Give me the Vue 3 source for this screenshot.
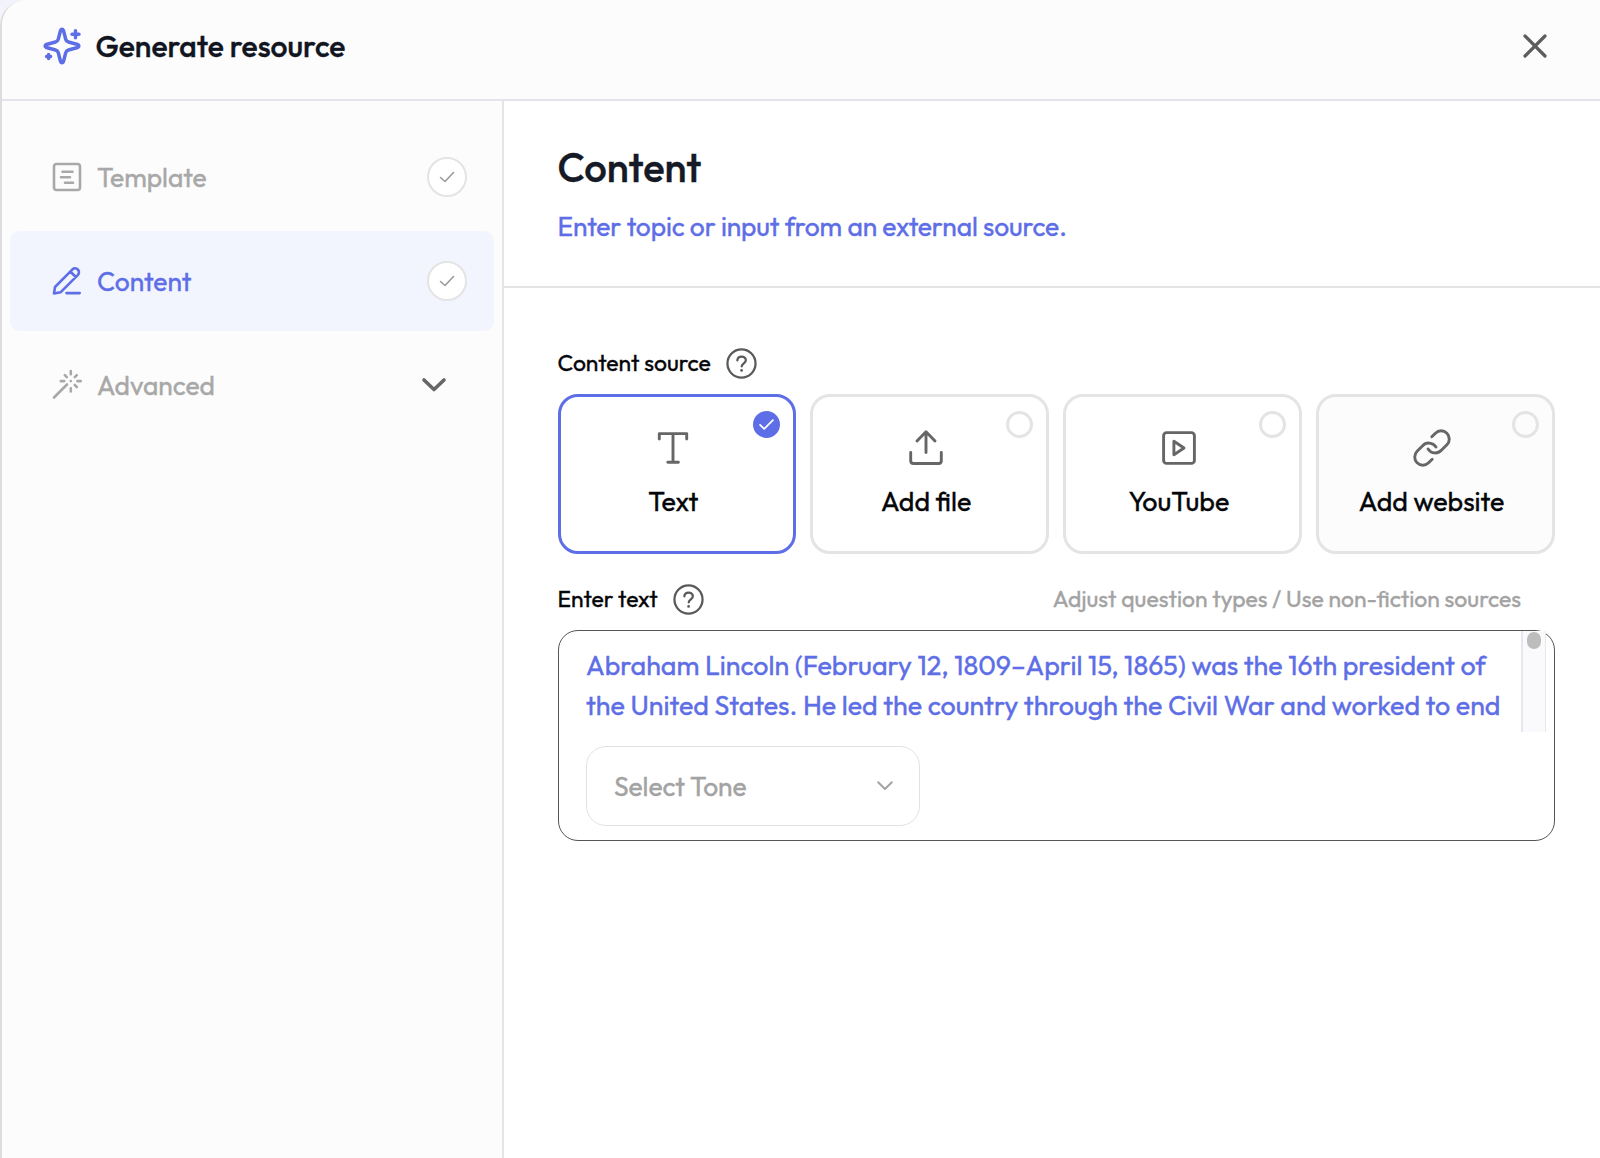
<script setup>
import { ref } from 'vue'

const steps = [
  { id: 'template', label: 'Template', done: true },
  { id: 'content', label: 'Content', done: true },
  { id: 'advanced', label: 'Advanced', done: false },
]

const sources = [
  { id: 'text', label: 'Text' },
  { id: 'file', label: 'Add file' },
  { id: 'youtube', label: 'YouTube' },
  { id: 'website', label: 'Add website' },
]

const activeStep = ref('content')
const activeSource = ref('text')
const lines = [
  'Abraham Lincoln (February 12, 1809–April 15, 1865) was the 16th president of',
  'the United States. He led the country through the Civil War and worked to end',
]
</script>

<template>
  <div class="backdrop">
    <div class="dialog">
      <header class="dialog-header">
        <svg class="sparkle" viewBox="0 0 38 38">
          <path
            d="M19 2.2c.9 0 1.3.8 1.6 1.8l2.1 8.2c.4 1.6 1.2 2.4 2.8 2.8l8.2 2.2c1 .3 2.1.7 2.1 1.8s-1.1 1.5-2.1 1.8l-8.2 2.2c-1.6.4-2.4 1.2-2.8 2.8L20.6 34c-.3 1-.7 1.8-1.6 1.8s-1.3-.8-1.6-1.8l-2.1-8.2c-.4-1.6-1.2-2.4-2.8-2.8l-8.2-2.2c-1-.3-2.1-.7-2.1-1.8s1.1-1.5 2.1-1.8l8.2-2.2c1.6-.4 2.4-1.2 2.8-2.8L17.4 4c.3-1 .7-1.8 1.6-1.8z"
          />
          <path d="M32.5 3.8v7M29 7.3h7M5.6 27.6v4M3.6 29.6h4" />
        </svg>
        <h1>Generate resource</h1>
        <button class="close" type="button" aria-label="Close">
          <svg viewBox="0 0 24 24"><path d="M2 2l20 20M22 2L2 22" /></svg>
        </button>
      </header>

      <div class="dialog-body">
        <nav class="sidebar">
          <button
            v-for="step in steps"
            :key="step.id"
            type="button"
            class="step"
            :class="{ active: step.id === activeStep }"
            @click="activeStep = step.id"
          >
            <svg class="step-icon" viewBox="0 0 30 30">
              <template v-if="step.id === 'template'">
                <rect x="2" y="2" width="26" height="26" rx="2.5" />
                <path d="M10.5 9.7h10M9 15.2h9M13 20.7h8" />
              </template>
              <template v-else-if="step.id === 'content'">
                <path d="M2 27.5l1-6.5L20.5 3.3a3.9 3.9 0 0 1 5.5 5.5L8.5 26.3zM18.3 5.5l5.5 5.5M14.5 27.1h13.2" />
              </template>
              <template v-else>
                <path d="M2 27.5l13-13M18.8 1v3.2M18.8 18.2v3.2M8.8 11.1h3.4M25.4 11.1h3.4M12.8 5.2l2 2M24.800 5.2l-2 2M24.800 17l-2-2M18.800 11.1h.01" />
              </template>
            </svg>
            <span class="step-label">{{ step.label }}</span>
            <span v-if="step.done" class="step-check">
              <svg viewBox="0 0 16 12"><path d="M1.5 6.5l4.5 4L14.5 1.5" /></svg>
            </span>
            <svg v-else class="step-chevron" viewBox="0 0 24 14"><path d="M2 2l10 9.5L22 2" /></svg>
          </button>
        </nav>

        <main class="pane">
          <div class="pane-header">
            <h2>Content</h2>
            <p>Enter topic or input from an external source.</p>
          </div>

          <div class="pane-body">
            <div class="field-row">
              <span class="field-label">Content source</span>
              <svg class="help" viewBox="0 0 32 32">
                <circle cx="16" cy="16" r="14.5" />
                <path d="M11.7 12.8c.2-2.4 2-4 4.4-4 2.5 0 4.4 1.6 4.4 3.9 0 2.9-4.2 3.3-4.3 6.3" />
                <path class="help-dot" d="M16.1 23.1h.01" />
              </svg>
            </div>

            <div class="cards">
              <button
                v-for="source in sources"
                :key="source.id"
                type="button"
                class="card"
                :class="[source.id, { selected: source.id === activeSource }]"
                @click="activeSource = source.id"
              >
                <svg class="card-icon" viewBox="0 0 38 38">
                  <path v-if="source.id === 'text'" d="M5.3 10V4.6h27.4V10M19 4.6v28.6M13.8 33.2h10.6" />
                  <path v-else-if="source.id === 'file'" d="M19 23.5V3M10 12l9-9.3 9 9.3M3.7 23.5v8.2q0 2.8 2.8 2.8h25q2.8 0 2.8-2.8v-8.2" />
                  <template v-else-if="source.id === 'youtube'">
                    <rect x="3.6" y="3.6" width="30.8" height="30.8" rx="3" />
                    <path d="M13.9 12.3v13.4L24 19z" />
                  </template>
                  <path
                    v-else
                    d="M18.8 7.7l3.6-3.5a8.13 8.13 0 0 1 11.5 11.5l-5.3 5.3a8.5 8.5 0 0 1-13.6-1M19.2 30.3l-3.6 3.5A8.13 8.13 0 0 1 4.1 22.3l5.3-5.3a8.5 8.5 0 0 1 13.6 1"
                  />
                </svg>
                <span>{{ source.label }}</span>
                <i class="radio">
                  <svg v-if="source.id === activeSource" viewBox="0 0 16 12"><path d="M1 6.5l4.5 4.3L15 1.3" /></svg>
                </i>
              </button>
            </div>

            <div class="field-row second">
              <span class="field-label">Enter text</span>
              <svg class="help" viewBox="0 0 32 32">
                <circle cx="16" cy="16" r="14.5" />
                <path d="M11.7 12.8c.2-2.4 2-4 4.4-4 2.5 0 4.4 1.6 4.4 3.9 0 2.9-4.2 3.3-4.3 6.3" />
                <path class="help-dot" d="M16.1 23.1h.01" />
              </svg>
              <span class="hint">Adjust question types / Use non-fiction sources</span>
            </div>

            <div class="text-box">
              <div class="text-scroll">
                <div class="text-lines">
                  <div v-for="line in lines" :key="line">{{ line }}</div>
                </div>
                <div class="track"><div class="thumb"></div></div>
              </div>
              <button class="tone" type="button">
                <span>Select Tone</span>
                <svg viewBox="0 0 16 10"><path d="M1.2 1.3L8 8l6.8-6.7" /></svg>
              </button>
            </div>
          </div>
        </main>
      </div>
    </div>
  </div>
</template>

<style>
body {
  overflow: hidden;
}
</style>

<style scoped>
* {
  box-sizing: border-box;
}

.backdrop {
  height: 1158px;
  background: #f3f4fb;
  font-family: Outfit, Lato, sans-serif;
  -webkit-text-stroke: 0.35px currentColor;
  overflow: hidden;
}

.dialog {
  display: flex;
  flex-direction: column;
  height: 100%;
  border-left: 2px solid #dcdcde;
  border-top-left-radius: 26px;
  background: #fff;
  overflow: hidden;
}

svg {
  display: block;
  flex: none;
  fill: none;
  stroke: currentColor;
  stroke-linecap: round;
  stroke-linejoin: round;
  overflow: visible;
}

button {
  margin: 0;
  border: 0;
  padding: 0;
  background: none;
  color: inherit;
  font: inherit;
}

.dialog-header {
  display: flex;
  align-items: center;
  height: 101px;
  border-bottom: 2px solid #e4e4ec;
  padding: 0 53px 8px 41px;
  background: #fcfcfc;
}

.sparkle {
  width: 38px;
  height: 38px;
  color: #5e6ee6;
  stroke-width: 3.5;
}

h1 {
  margin: 0 auto 0 14.5px;
  color: #11151f;
  font-size: 30.1px;
  font-weight: 500;
  line-height: 38px;
}

.close {
  color: #5c5c5c;
}

.close svg {
  width: 24px;
  height: 24px;
  stroke-width: 3.2;
}

.dialog-body {
  display: flex;
  flex: 1;
}

.sidebar {
  display: flex;
  flex-direction: column;
  gap: 4px;
  width: 502px;
  border-right: 2px solid #e4e4e6;
  padding: 26px 8px;
  background: #fcfcfc;
}

.step {
  display: flex;
  align-items: center;
  height: 100px;
  border-radius: 10px;
  padding: 0 27px 0 42px;
  color: #a8a8a8;
  font-size: 26.4px;
}

.step.active {
  background: #f2f5fe;
  color: #5e6ee6;
}

.step-icon {
  width: 30px;
  height: 30px;
  stroke-width: 2.6;
}

.step-label {
  margin: 0 auto 0 15px;
}

.step-check {
  display: grid;
  place-items: center;
  width: 40px;
  height: 40px;
  border: 2px solid #e4e4e6;
  border-radius: 50%;
  background: #fff;
  color: #9a9a9a;
}

.step-check svg {
  width: 16px;
  height: 12px;
  stroke-width: 1.6;
}

.step-chevron {
  width: 24px;
  height: 14px;
  margin-right: 21.5px;
  color: #666;
  stroke-width: 3.6;
}

.pane {
  flex: 1;
}

.pane-header {
  height: 187px;
  border-bottom: 2px solid #e4e4e6;
  padding: 41px 0 0 53.5px;
}

h2 {
  margin: 0;
  color: #151a26;
  font-size: 40px;
  font-weight: 500;
  line-height: 50px;
}

.pane-header p {
  margin: 18px 0 0;
  color: #5e6ee6;
  font-size: 26.4px;
  letter-spacing: -0.12px;
  line-height: 34px;
}

.pane-body {
  padding: 59px 45.5px 0 53.5px;
}

.field-row {
  display: flex;
  align-items: center;
  height: 32px;
  margin-bottom: 15px;
  color: #05060a;
  font-size: 22.9px;
}

.field-row.second {
  margin: 29px 0 15px;
}

.field-label,
.hint {
  padding-bottom: 1px;
}

.help {
  width: 31px;
  height: 31px;
  margin-left: 15px;
  color: #595959;
  stroke-width: 2.3;
}

.help-dot {
  stroke-width: 2.8;
}

.hint {
  margin: 0 33.5px 0 auto;
  color: #a3a3a3;
}

.cards {
  display: grid;
  grid-template-columns: repeat(4, 1fr);
  gap: 14px;
}

.card {
  position: relative;
  display: flex;
  flex-direction: column;
  align-items: center;
  height: 160px;
  border: 3px solid #e4e4e6;
  border-radius: 20px;
  padding: 32px 7px 0 0;
  color: #05060a;
  font-size: 26.8px;
  line-height: 34px;
}

.card.selected {
  border-color: #5e6ee6;
}

.card.website {
  background: #fcfcfc;
}

.card-icon {
  width: 38px;
  height: 38px;
  margin-bottom: 17px;
  color: #666;
  stroke-width: 2.9;
}

.radio {
  position: absolute;
  top: 14px;
  right: 13px;
  display: grid;
  place-items: center;
  width: 27px;
  height: 27px;
  border: 3px solid #e4e4e6;
  border-radius: 50%;
}

.selected .radio {
  border-color: #5e6ee6;
  background: #5e6ee6;
  color: #fff;
}

.radio svg {
  width: 15px;
  height: 11px;
  stroke-width: 1.9;
}

.text-box {
  height: 211px;
  border: 1.5px solid #555;
  border-radius: 20px;
  padding: 0 8px 0 27.5px;
}

.text-scroll {
  display: flex;
  justify-content: space-between;
  height: 101px;
}

.text-lines {
  padding-top: 14px;
  color: #5e6ee6;
  font-size: 26.8px;
  line-height: 40px;
  white-space: nowrap;
}

.track {
  width: 25px;
  border: solid #e8e8ec;
  border-width: 0 1px 0 2px;
  background: #fafafc;
}

.thumb {
  width: 14px;
  height: 17px;
  margin: 1px auto 0;
  border-radius: 7px;
  background: #bdbdbd;
}

.tone {
  display: flex;
  align-items: center;
  justify-content: space-between;
  width: 334px;
  height: 80px;
  margin-top: 14px;
  border: 1.5px solid #e2e2e6;
  border-radius: 20px;
  padding: 0 26px 0 27px;
  color: #a3a3a3;
  font-size: 26.4px;
}

.tone svg {
  width: 16px;
  height: 10px;
  stroke-width: 2;
}
</style>
